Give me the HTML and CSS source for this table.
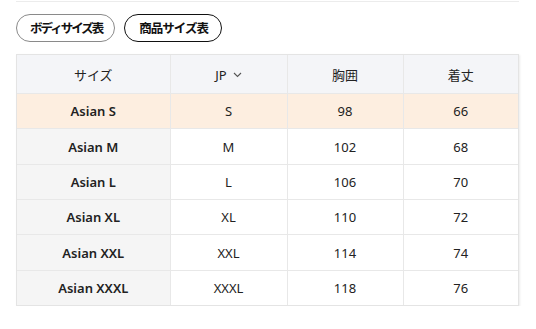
FILE: index.html
```html
<!DOCTYPE html>
<html lang="ja">
<head>
<meta charset="utf-8">
<link rel="stylesheet" href="styles.css">
</head>
<body>
<div class="page">
  <div class="topline"></div>
  <div class="tabs">
    <button class="tab tab-body">ボディサイズ表</button>
    <button class="tab active">商品サイズ表</button>
  </div>
  <div class="table-wrap">
    <table class="size-table">
      <colgroup>
        <col class="c1"><col class="c2"><col class="c3"><col class="c4">
      </colgroup>
      <thead>
        <tr>
          <th>サイズ</th>
          <th><span class="jp">JP <svg class="chev" width="9" height="6" viewBox="0 0 9 6"><path d="M1 1l3.5 3.5L8 1" fill="none" stroke="#555" stroke-width="1.1"/></svg></span></th>
          <th>胸囲</th>
          <th>着丈</th>
        </tr>
      </thead>
      <tbody>
        <tr class="hl"><td class="name">Asian S</td><td>S</td><td>98</td><td>66</td></tr>
        <tr><td class="name">Asian M</td><td>M</td><td>102</td><td>68</td></tr>
        <tr><td class="name">Asian L</td><td>L</td><td>106</td><td>70</td></tr>
        <tr><td class="name">Asian XL</td><td>XL</td><td>110</td><td>72</td></tr>
        <tr><td class="name">Asian XXL</td><td>XXL</td><td>114</td><td>74</td></tr>
        <tr><td class="name">Asian XXXL</td><td>XXXL</td><td>118</td><td>76</td></tr>
      </tbody>
    </table>
  </div>
</div>
</body>
</html>
```
FILE: styles.css
```css
html, body {
  margin: 0;
  padding: 0;
  background: #fff;
}
body {
  font-family: "Noto Sans", "Noto Sans CJK JP", sans-serif;
  color: #222;
  font-size: 13px;
}
.page {
  padding: 1px 17px 0 16px;
}
.topline {
  height: 1px;
  background: #ececec;
}
.tabs {
  display: flex;
  gap: 9px;
  padding: 12px 0 12px;
}
.tab {
  font-family: "Noto Sans CJK JP", sans-serif;
  font-size: 12.5px;
  font-weight: 700;
  color: #111;
  background: #fff;
  border: 1px solid #8a8a8a;
  border-radius: 15px;
  height: 28px;
  padding: 0 13px 0 14px;
  line-height: 26px;
  letter-spacing: -1px;
}
.tab-body {
  letter-spacing: -2px;
  padding: 0 12px 0 13px;
}
.tab.active {
  border-color: #111;
}
.table-wrap {
  border: 1px solid #e4e4e4;
  box-shadow: 1px 1px 2px rgba(0,0,0,0.08);
  width: 501px;
}
.size-table {
  width: 100%;
  border-collapse: collapse;
  table-layout: fixed;
}
.c1 { width: 153px; }
.c2 { width: 117px; }
.c3 { width: 116px; }
.c4 { width: 115px; }
th, td {
  text-align: center;
  border-left: 1px solid #e8e8e8;
  border-top: 1px solid #e8e8e8;
  padding: 0;
}
th:first-child, td:first-child { border-left: none; }
thead th {
  border-top: none;
  background: #f4f5f8;
  font-weight: 400;
  height: 38px;
  font-family: "Noto Sans CJK JP", sans-serif;
}
td { height: 34.35px; }
td.name {
  background: #f5f5f5;
  font-weight: 600;
}
tr.hl td, tr.hl td.name {
  background: #fdeee0;
}
.jp {
  display: inline-flex;
  align-items: center;
  gap: 4px;
  font-family: "Noto Sans", sans-serif;
}
.chev { margin-left: 2px; }
```
